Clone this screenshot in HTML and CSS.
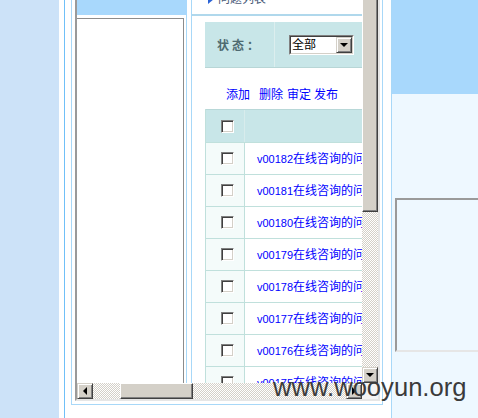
FILE: index.html
```html
<!DOCTYPE html>
<html>
<head>
<meta charset="utf-8">
<title>问题列表</title>
<link rel="stylesheet" href="styles.css">
</head>
<body>
<div class="page">
  <div class="side"></div>
  <div class="main">
    <div class="framebox">
      <div class="frame">
        <div class="viewport">
          <div class="fpage">
            <div class="lcol">
              <div class="lband"></div>
              <div class="lbody"><div class="lbox"></div></div>
            </div>
            <div class="rcol">
              <div class="qtitle"><svg class="qicon" width="6" height="10" viewBox="0 0 6 10"><polygon points="0,0 6,5 0,10" fill="#2b63d6"/></svg><span>问题列表</span></div>
              <div class="rcontent">
                <div class="status">
                  <div class="st-label">状态：</div>
                  <div class="st-field">
                    <div class="select"><div class="sel-inner"><span class="sel-text">全部</span><span class="sel-btn"><i class="arr-down"></i></span></div></div>
                  </div>
                </div>
                <div class="actions"><a class="act act-1">添加</a><a class="act act-2">删除</a><a class="act act-3">审定</a><a class="act">发布</a></div>
                <div class="grid">
                  <div class="row head"><div class="c1"><span class="cb"></span></div><div class="c2"></div></div>
                  <div class="row"><div class="c1"><span class="cb"></span></div><div class="c2"><a class="item"><span class="code">v00182</span>在线咨询的问题</a></div></div>
                  <div class="row"><div class="c1"><span class="cb"></span></div><div class="c2"><a class="item"><span class="code">v00181</span>在线咨询的问题</a></div></div>
                  <div class="row"><div class="c1"><span class="cb"></span></div><div class="c2"><a class="item"><span class="code">v00180</span>在线咨询的问题</a></div></div>
                  <div class="row"><div class="c1"><span class="cb"></span></div><div class="c2"><a class="item"><span class="code">v00179</span>在线咨询的问题</a></div></div>
                  <div class="row"><div class="c1"><span class="cb"></span></div><div class="c2"><a class="item"><span class="code">v00178</span>在线咨询的问题</a></div></div>
                  <div class="row"><div class="c1"><span class="cb"></span></div><div class="c2"><a class="item"><span class="code">v00177</span>在线咨询的问题</a></div></div>
                  <div class="row"><div class="c1"><span class="cb"></span></div><div class="c2"><a class="item"><span class="code">v00176</span>在线咨询的问题</a></div></div>
                  <div class="row"><div class="c1"><span class="cb"></span></div><div class="c2"><a class="item"><span class="code">v00175</span>在线咨询的问题</a></div></div>
                  <div class="row"><div class="c1"><span class="cb"></span></div><div class="c2"><a class="item"><span class="code">v00174</span>在线咨询的问题</a></div></div>
                </div>
              </div>
            </div>
          </div>
        </div>
        <div class="vscroll">
          <div class="vthumb"></div>
          <div class="track"></div>
          <div class="sbtn"><i class="arr-down"></i></div>
        </div>
        <div class="hscroll">
          <div class="sbtn"><i class="arr-left"></i></div>
          <div class="track track-a"></div>
          <div class="hthumb"></div>
          <div class="track"></div>
          <div class="sbtn"><i class="arr-right"></i></div>
        </div>
        <div class="corner"></div>
      </div>
    </div>
    <div class="rpanel">
      <div class="rtop"></div>
      <div class="rbox"></div>
    </div>
  </div>
</div>
<div class="watermark">www.wooyun.org</div>
</body>
</html>
```
FILE: styles.css
```css
* { box-sizing: border-box; }
html, body { margin: 0; padding: 0; }
body {
  width: 478px;
  height: 418px;
  overflow: hidden;
  position: relative;
  background: #fff;
  font: 12px "Liberation Sans", "Noto Sans CJK SC", sans-serif;
}
.page { display: flex; height: 418px; }
.side { flex: none; width: 59px; background: #cce2f8; }
.main {
  flex: none;
  width: 414px;
  margin-left: 5px;
  border-left: 1px solid #70c0f8;
  padding-left: 6px;
  display: flex;
  align-items: flex-start;
}
.framebox {
  flex: none;
  width: 312px;
  height: 405px;
  border: 1px solid #a8d8f8;
  border-top: none;
  padding: 0 2px 3px 3px;
}
.frame {
  width: 305px;
  height: 401px;
  border-left: 2px solid #9a9a9a;
  border-right: 2px solid #e6e6e6;
  border-bottom: 2px solid #e6e6e6;
  display: grid;
  grid-template-columns: 285px 16px;
  grid-template-rows: 383px 16px;
}
.viewport { overflow: hidden; }
.fpage { display: flex; align-items: flex-start; width: 700px; }
.lcol { flex: none; width: 110px; }
.lband { height: 15px; background: #a8d8fc; }
.lbody {
  height: 400px;
  border-right: 1px solid #a8d8f8;
  padding: 3px 2px 0 0;
}
.lbox {
  height: 400px;
  border-top: 1px solid #8c8c8c;
  border-right: 1px solid #8c8c8c;
}
.rcol {
  flex: none;
  width: 500px;
  margin-left: 4px;
  border-left: 1px solid #a8d8f8;
  min-height: 400px;
}
.qtitle {
  margin-top: -10px;
  height: 26px;
  padding: 2px 0 8px 16px;
  line-height: 14px;
  border-bottom: 2px solid #b0d8ec;
  display: flex;
  align-items: center;
  color: #4a5a78;
}
.qicon { display: block; margin-right: 4px; }
.rcontent { padding: 6px 0 0 13px; }
.status {
  display: flex;
  height: 46px;
  background: #c8e6e8;
  border-bottom: 1px solid #b8d6d6;
}
.st-label {
  width: 69px;
  padding-left: 12px;
  display: flex;
  align-items: center;
  font-weight: bold;
  letter-spacing: 3px;
  color: #4e6a70;
}
.st-field {
  flex: 1;
  border-left: 1px solid #dceeee;
  padding-left: 14px;
  display: flex;
  align-items: center;
}
.select {
  width: 65px;
  height: 20px;
  border: 1px solid;
  border-color: #808080 #fff #fff #808080;
  background: #fff;
}
.sel-inner {
  height: 100%;
  border: 1px solid;
  border-color: #404040 #d4d0c8 #d4d0c8 #404040;
  display: flex;
  align-items: center;
  justify-content: space-between;
}
.sel-text { padding-left: 1px; line-height: 14px; color: #000; }
.sel-btn {
  width: 16px;
  height: 16px;
  background: #d4d0c8;
  border: 1px solid;
  border-color: #d4d0c8 #404040 #404040 #d4d0c8;
  box-shadow: inset 1px 1px #fff, inset -1px -1px #808080;
  display: flex;
  align-items: center;
  justify-content: center;
}
.actions {
  height: 41px;
  padding: 20px 0 0 21px;
  line-height: 14px;
  display: flex;
}
.act { color: #0000ff; }
.act-1 { margin-right: 9px; }
.act-2 { margin-right: 4px; }
.act-3 { margin-right: 3px; }
.grid { border-left: 1px solid #c0e0dc; }
.row {
  display: flex;
  height: 32px;
  border-bottom: 1px solid #c0e0dc;
}
.row.head {
  height: 34px;
  border-top: 1px solid #b8d8d8;
  background: #c8e6e8;
}
.c1 {
  flex: none;
  width: 39px;
  border-right: 1px solid #c0e0dc;
  background: #f4fbfa;
  padding-left: 15px;
  display: flex;
  align-items: center;
}
.head .c1 { background: #c8e6e8; border-right-color: #d8ecec; }
.c2 {
  flex: 1;
  padding-left: 12px;
  display: flex;
  align-items: center;
  white-space: nowrap;
  line-height: 14px;
}
.item { color: #0000ff; }
.code { font-size: 11px; }
.cb {
  width: 13px;
  height: 13px;
  background: #fff;
  border: 1px solid;
  border-color: #808080 #fff #fff #808080;
  box-shadow: inset 1px 1px #404040, inset -1px -1px #d4d0c8;
}
.vscroll { display: flex; flex-direction: column; }
.vthumb {
  height: 212px;
  flex: none;
  background: #d4d0c8;
  border-left: 1px solid #fff;
  border-right: 1px solid #404040;
  border-bottom: 1px solid #404040;
  box-shadow: inset -1px -1px #808080;
}
.track {
  flex: 1;
  background: repeating-conic-gradient(#d4d0c8 0 25%, #fff 0 50%) 0 0 / 2px 2px;
}
.track-a { flex: none; width: 27px; }
.hscroll { display: flex; }
.hthumb {
  flex: none;
  width: 73px;
  background: #d4d0c8;
  border: 1px solid;
  border-color: #fff #404040 #404040 #fff;
  box-shadow: inset -1px -1px #808080;
}
.sbtn {
  flex: none;
  width: 16px;
  height: 16px;
  background: #d4d0c8;
  border: 1px solid;
  border-color: #d4d0c8 #404040 #404040 #d4d0c8;
  box-shadow: inset 1px 1px #fff, inset -1px -1px #808080;
  display: flex;
  align-items: center;
  justify-content: center;
}
.arr-down {
  display: block;
  width: 0; height: 0;
  border-left: 4px solid transparent;
  border-right: 4px solid transparent;
  border-top: 4px solid #000;
}
.arr-left {
  display: block;
  width: 0; height: 0;
  border-top: 4px solid transparent;
  border-bottom: 4px solid transparent;
  border-right: 4px solid #000;
}
.arr-right {
  display: block;
  width: 0; height: 0;
  border-top: 4px solid transparent;
  border-bottom: 4px solid transparent;
  border-left: 4px solid #000;
}
.corner { background: #f4f4f4; }
.rpanel {
  flex: none;
  width: 87px;
  height: 418px;
  margin-left: 8px;
  border-left: 1px solid #a8d8f8;
  background: #eef8ff;
}
.rtop { height: 94px; background: #a8d8fc; }
.rbox {
  height: 154px;
  margin: 104px 0 0 3px;
  border-top: 2px solid #9a9a9a;
  border-left: 2px solid #9a9a9a;
  border-bottom: 2px solid #e6e6e6;
}
.watermark {
  position: absolute;
  left: 273px;
  top: 374px;
  font: 25.6px/26px "Liberation Sans", sans-serif;
  color: #3b3b3b;
  white-space: nowrap;
}
```
